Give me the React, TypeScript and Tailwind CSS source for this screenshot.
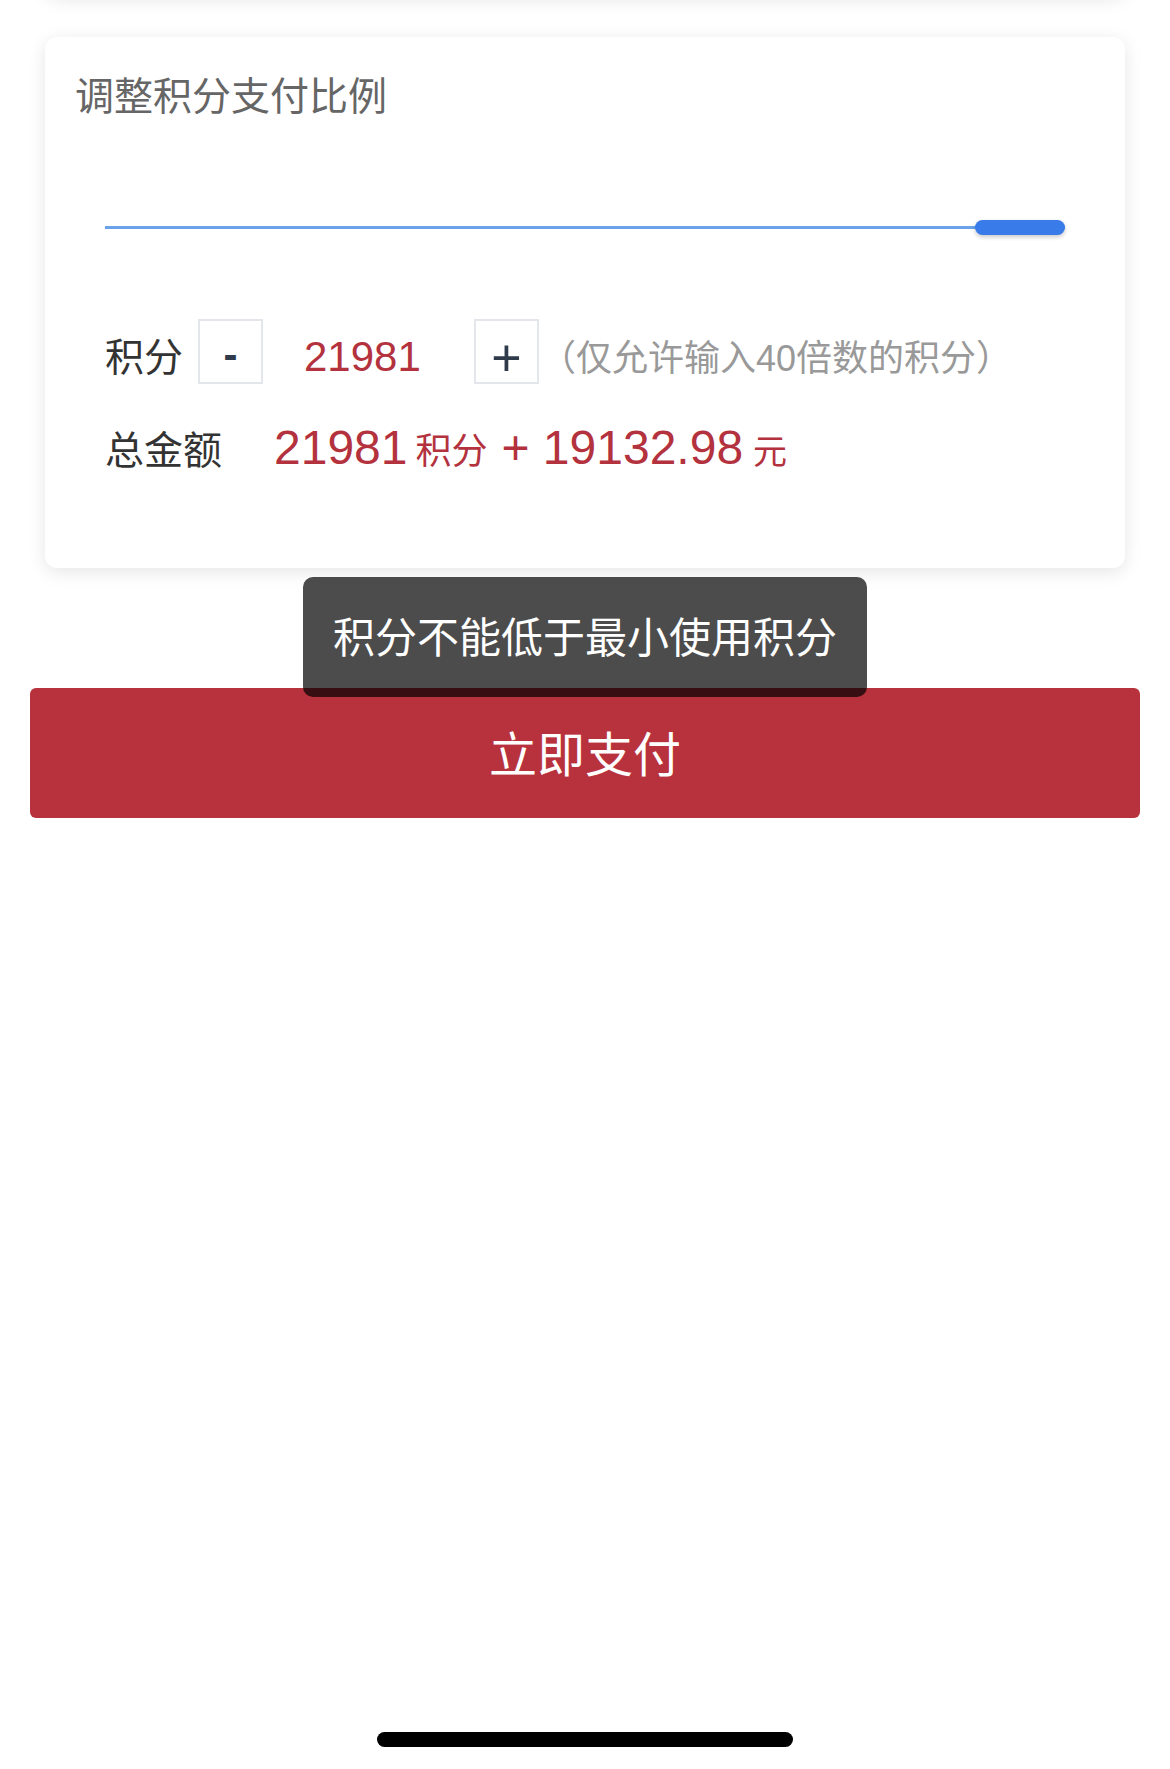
import React from "react";

export default function App() {
  return (
    <div className="relative min-h-[1769px] w-full overflow-hidden bg-white font-['Liberation_Sans','Noto_Sans_CJK_SC',sans-serif]">
      {/* previous card, mostly scrolled out of view */}
      <div className="mx-[45px] -mt-[100px] h-[95px] rounded-xl bg-white shadow-[0_4px_18px_rgba(0,0,0,0.1)]" />

      {/* points card */}
      <div className="mx-[45px] mt-[42px] h-[531px] rounded-xl bg-white pt-[40px] shadow-[0_4px_18px_rgba(0,0,0,0.1)]">
        <div className="pl-[30px] text-[39px] leading-none text-[#666666]">调整积分支付比例</div>

        {/* slider */}
        <div className="relative mx-[60px] mt-[104px] h-[15px]">
          <div className="absolute left-0 right-0 top-[6px] h-[3px] bg-[#6aa3ec]" />
          <div className="absolute right-0 top-0 h-[15px] w-[90px] rounded-full bg-[#3a7bea] shadow-[0_2px_4px_rgba(0,0,0,0.22)]" />
        </div>

        {/* row 1 */}
        <div className="mt-[84px] flex h-[65px] items-center pl-[60px]">
          <span className="w-[78px] pt-[12px] text-[39px] leading-none text-[#333333]">积分</span>
          <div className="ml-[15px] flex h-[65px] w-[65px] items-center justify-center border-2 border-[#e3e6ea]">
            <span className="pt-[6px] text-[42px] font-bold leading-none text-[#2f3a4a]">-</span>
          </div>
          <div className="w-[211px] pl-[41px] pt-[10px] text-[42px] leading-none text-[#b3323e]">21981</div>
          <div className="flex h-[65px] w-[65px] items-center justify-center border-2 border-[#e3e6ea]">
            <span className="pt-[13px] text-[52px] leading-none text-[#2f3a4a]">+</span>
          </div>
          <span className="ml-[1px] pt-[14px] text-[36px] leading-none text-[#999999]">（仅允许输入40倍数的积分）</span>
        </div>

        {/* row 2 */}
        <div className="mt-[40px] flex items-baseline pl-[60px] text-[#b3323e]">
          <span className="w-[169px] text-[39px] leading-none text-[#333333]">总金额</span>
          <span className="text-[48px] leading-none">21981</span>
          <span className="ml-[8px] text-[36px] leading-none">积分</span>
          <span className="ml-[14px] text-[48px] leading-none">+ 19132.98</span>
          <span className="ml-[10px] text-[34px] leading-none">元</span>
        </div>
      </div>

      {/* pay button */}
      <div className="mx-[30px] mt-[120px] flex h-[130px] items-center justify-center rounded-[6px] bg-[#b8323d]">
        <span className="pt-[5px] text-[48px] leading-none text-white">立即支付</span>
      </div>

      {/* toast */}
      <div className="absolute left-1/2 top-[577px] flex h-[120px] w-[564px] -translate-x-1/2 items-center justify-center rounded-[10px] bg-black/70">
        <span className="pt-[3px] text-[42px] leading-none text-white">积分不能低于最小使用积分</span>
      </div>

      {/* home indicator */}
      <div className="absolute bottom-[22px] left-1/2 h-[15px] w-[416px] -translate-x-1/2 rounded-full bg-black" />
    </div>
  );
}
